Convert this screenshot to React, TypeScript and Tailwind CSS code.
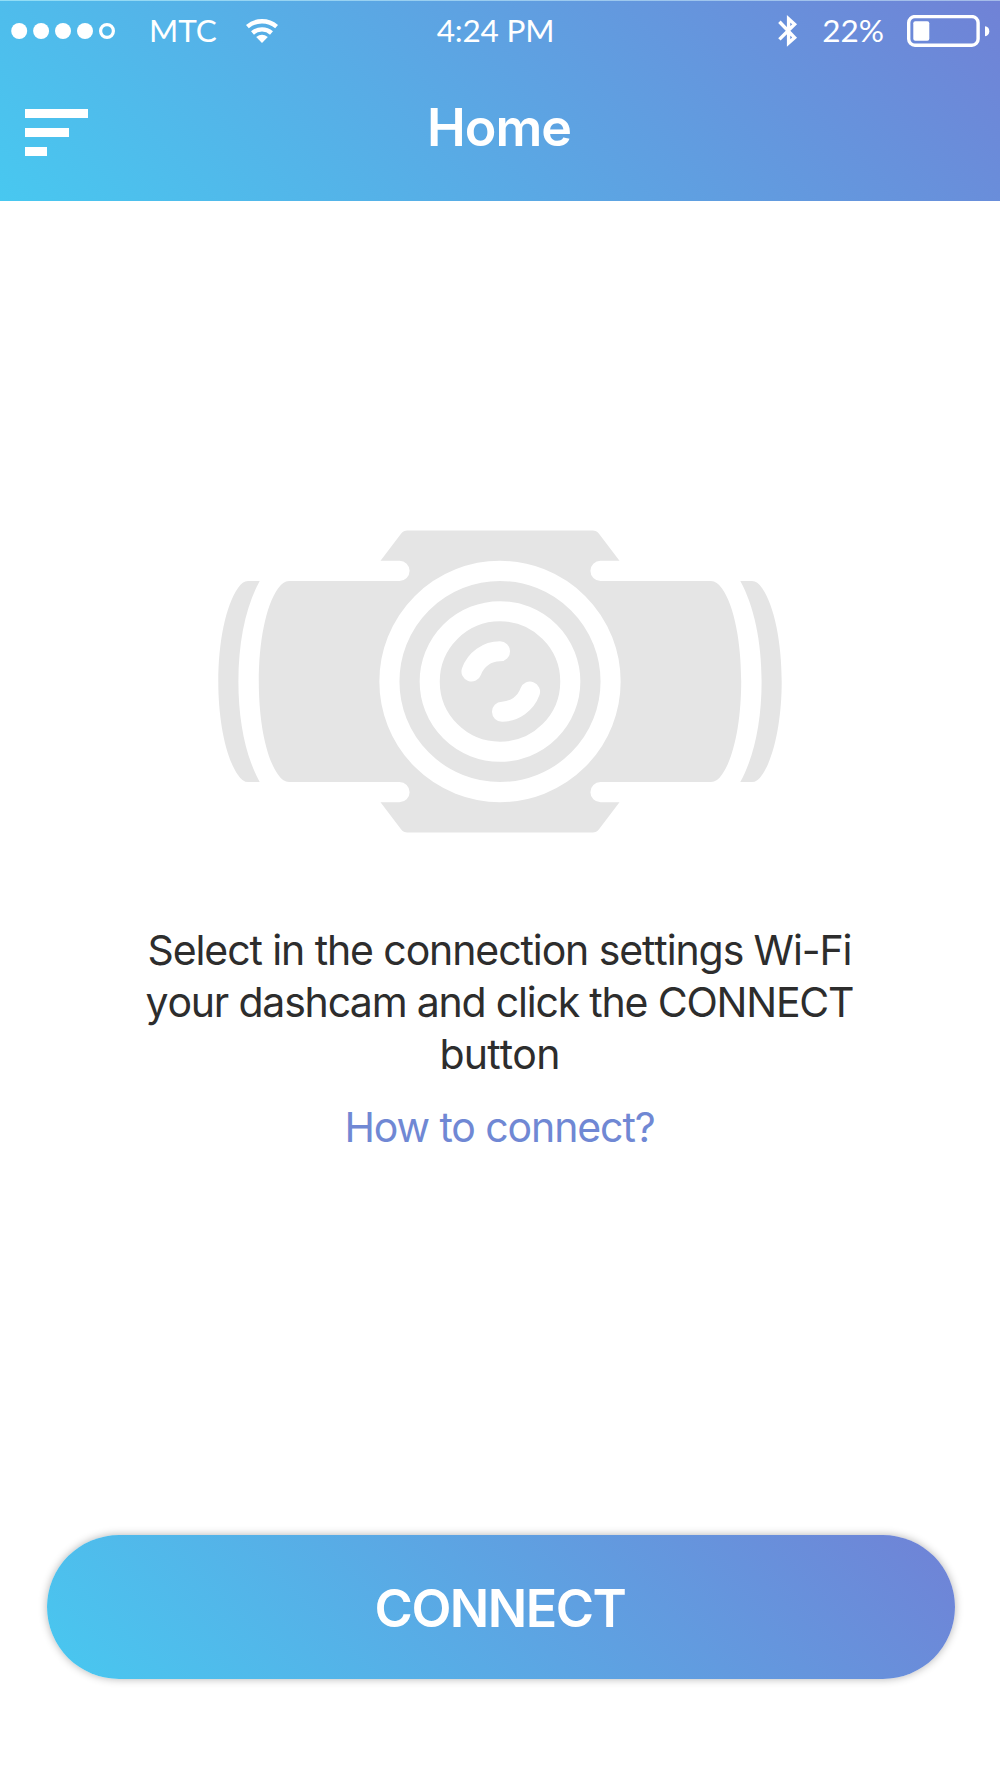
import React from "react";

const SignalDots = () => (
  <svg width="104" height="16" viewBox="0 0 104 16" fill="white">
    <circle cx="8.2" cy="8" r="8" />
    <circle cx="30.1" cy="8" r="8" />
    <circle cx="52" cy="8" r="8" />
    <circle cx="74" cy="8" r="8" />
    <circle cx="96" cy="8" r="6.4" fill="none" stroke="white" strokeWidth="3.2" />
  </svg>
);

const WifiIcon = () => (
  <svg width="32" height="26" viewBox="0 0 32 26" fill="none" stroke="white" strokeWidth="4.4">
    <path d="M1.4 8.6 A22.5 22.5 0 0 1 30.6 8.6" />
    <path d="M6.5 15 A14.2 14.2 0 0 1 25.5 15" />
    <path d="M10.2 18.9 Q16 14.6 21.8 18.9 L16 25 Z" fill="white" stroke="none" />
  </svg>
);

const BluetoothIcon = () => (
  <svg width="20" height="34" viewBox="0 0 20 34" fill="none" stroke="white" strokeWidth="3.4">
    <path d="M1.4 7.8 L16.6 23.6 L10.6 29 V4.8 L16.6 10.2 L1.4 25.4" />
  </svg>
);

const BatteryIcon = () => (
  <svg width="84" height="32" viewBox="0 0 84 32" fill="white">
    <rect x="1.7" y="1.6" width="69.4" height="28.6" rx="6.2" fill="none" stroke="white" strokeWidth="3.4" />
    <rect x="6.3" y="6.3" width="16" height="19.4" rx="2" />
    <path d="M78 11.3 Q82.3 12 82.3 16.2 Q82.3 20.4 78 21.3 Z" />
  </svg>
);

const Dashcam = () => (
  <svg width="564" height="303" viewBox="218 530 564 303" className="block">
    <g fill="#e5e5e5">
      <path d="M407.5 530.5 H592.5 Q596.5 530.5 599 533.7 L619.5 560.7 H600.5 A10.1 10.1 0 0 0 600.5 580.9 H711 Q717 580.9 722 588.5 C734.5 606 741.2 643 741.2 681.5 C741.2 720 734.5 757 722 774.5 Q717 782.1 711 782.1 H600.5 A10.1 10.1 0 0 0 600.5 802.3 H619.5 L599 829.3 Q596.5 832.5 592.5 832.5 H407.5 Q403.5 832.5 401 829.3 L380.5 802.3 H399.5 A10.1 10.1 0 0 0 399.5 782.1 H289 Q283 782.1 278 774.5 C265.5 757 258.8 720 258.8 681.5 C258.8 643 265.5 606 278 588.5 Q283 580.9 289 580.9 H399.5 A10.1 10.1 0 0 0 399.5 560.7 H380.5 L401 533.7 Q403.5 530.5 407.5 530.5 Z" />
      <path d="M259.7 580.9 H248 Q242.5 580.9 238 588 C225.5 606 218.3 643 218.3 681.5 C218.3 720 225.5 757 238 775 Q242.5 782.1 248 782.1 H259.7 C246 757 238.4 722 238.4 681.5 C238.4 641 246 606 259.7 580.9 Z" />
      <path d="M740.3 580.9 H752 Q757.5 580.9 762 588 C774.5 606 781.7 643 781.7 681.5 C781.7 720 774.5 757 762 775 Q757.5 782.1 752 782.1 H740.3 C754 757 761.6 722 761.6 681.5 C761.6 641 754 606 740.3 580.9 Z" />
    </g>
    <g fill="none" stroke="white" strokeWidth="20.1">
      <circle cx="500" cy="681.5" r="110.6" />
      <circle cx="500" cy="681.5" r="70.3" />
      {/* lens reflections */}
      <path d="M500 651.3 A30.2 30.2 0 0 0 471.5 671.5" strokeLinecap="round" />
      <path d="M502 711.7 A30.2 30.2 0 0 0 530 691.7" strokeLinecap="round" />
    </g>
  </svg>
);

const App = () => {
  return (
    <div className="w-[1000px] h-[1778px] flex flex-col bg-white overflow-hidden font-['Inter',sans-serif]">
      <header className="h-[201px] shrink-0 border-t border-white/40 bg-linear-[45deg,#48c8f0,#7082d6]">
        <div className="h-[60px] pl-[11px] pr-[9px] grid grid-cols-3 items-center text-white text-[31.5px] leading-none font-['Lato',sans-serif]">
          <div className="flex items-center">
            <SignalDots />
            <span className="ml-[34px] mr-[29px] pb-px">MTC</span>
            <WifiIcon />
          </div>
          <span className="text-center pr-[11px] pb-px tracking-[-0.2px]">4:24 PM</span>
          <div className="flex items-center justify-end">
            <BluetoothIcon />
            <span className="ml-6 mr-[23px] pb-px">22%</span>
            <BatteryIcon />
          </div>
        </div>

        <div className="h-[142px] px-[25px] grid grid-cols-3 items-center">
          <button className="flex flex-col gap-[10px]">
            <span className="w-[63px] h-[9px] bg-white" />
            <span className="w-[44px] h-[9px] bg-white" />
            <span className="w-[22px] h-[9px] bg-white" />
          </button>
          <h1 className="-mt-2 pr-[2px] text-center text-white text-[52px] leading-none font-semibold tracking-[-1px]">Home</h1>
        </div>
      </header>

      <main className="flex-1 flex flex-col items-center pt-[329px]">
        <Dashcam />
        <p className="mt-[91px] pr-px text-center text-[41px] leading-[52px] text-[#2d2d2d] whitespace-nowrap [font-kerning:none]">
          <span className="block tracking-[-1.1px]">Select in the connection settings Wi-Fi</span>
          <span className="block tracking-[-1.2px]">your dashcam and click the CONNECT</span>
          <span className="block tracking-[-0.8px]">button</span>
        </p>
        <a href="#" className="mt-[21px] pr-px text-[41px] leading-[52px] text-[#7088d4] tracking-[-1.1px]">
          How to connect?
        </a>
      </main>

      <footer className="pl-[47px] pr-[45px] pb-[99px]">
        <button className="w-full h-[144px] pt-[3px] pr-[2px] rounded-full bg-linear-[45deg,#48c8f0,#7082d6] shadow-[0_0_8px_rgba(0,0,0,0.3)] text-white text-[52px] leading-none font-semibold tracking-[-1.5px]">
          CONNECT
        </button>
      </footer>
    </div>
  );
};

export default App;
